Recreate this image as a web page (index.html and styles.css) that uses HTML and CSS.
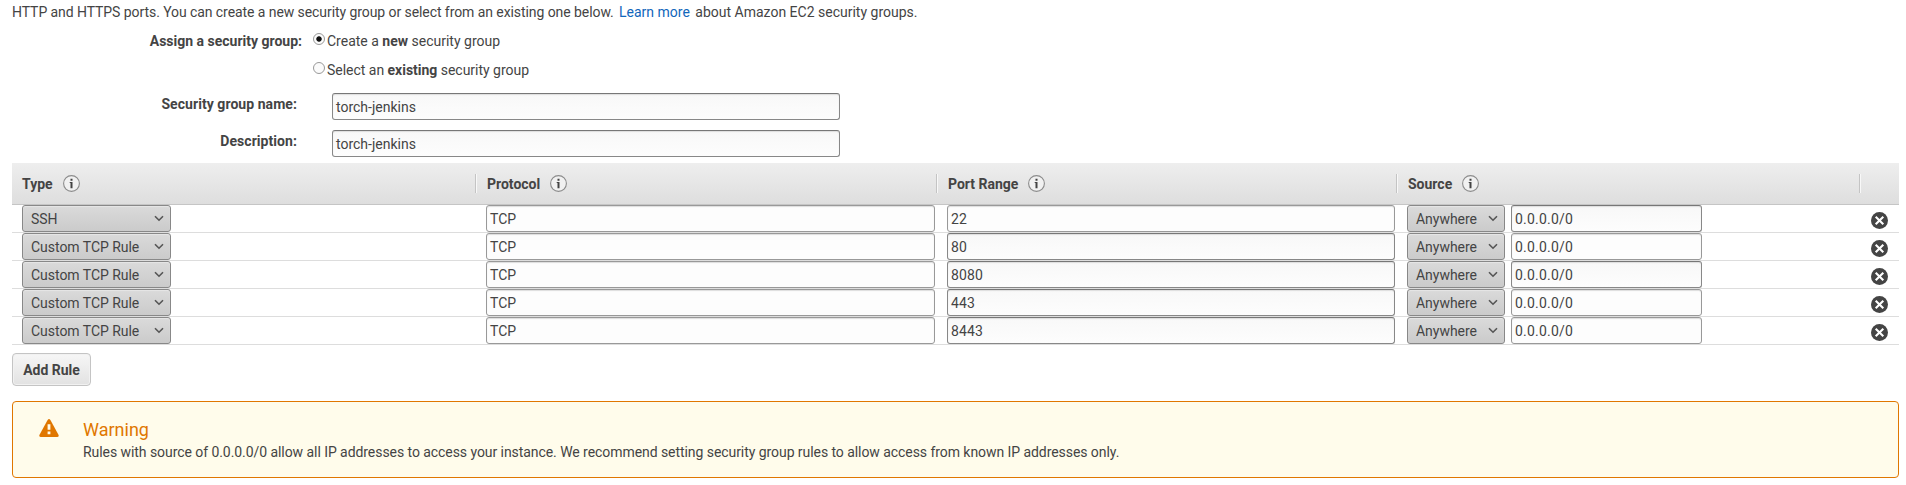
FILE: index.html
```html
<!DOCTYPE html>
<html lang="en">
<head>
<meta charset="utf-8">
<title>Configure Security Group</title>
<link rel="stylesheet" href="styles.css">
</head>
<body>
<svg class="defs" width="0" height="0">
  <symbol id="info" viewBox="0 0 17 17"><circle cx="8.5" cy="8.5" r="7.9" fill="#f1f1f1" stroke="#8c8c8c" stroke-width="1.1"/><path d="M7.5 3.8h2v2h-2zM6.7 7h2.8v6.3h-2V8h-.8z" fill="#444"/></symbol>
  <symbol id="chev" viewBox="0 0 10 7"><path d="M1 1.2L5 5.2L9 1.2" fill="none" stroke="#555" stroke-width="1.6"/></symbol>
  <symbol id="del" viewBox="0 0 17 17"><circle cx="8.5" cy="8.5" r="8.5" fill="#444"/><path d="M4.7 4.7l7.6 7.6M12.3 4.7l-7.6 7.6" stroke="#fff" stroke-width="2.1"/></symbol>
</svg>
<p class="intro"><span class="lead">HTTP and HTTPS ports. You can create a new security group or select from an existing one below. </span><a class="link">Learn more</a> about Amazon EC2 security groups.</p>
<div class="choice"><span class="choice-label">Assign a security group:</span><span class="radio on"></span><span>Create a <b>new</b> security group</span></div>
<div class="choice"><span class="choice-label"></span><span class="radio"></span><span class="option">Select an <b>existing</b> security group</span></div>
<div class="field first"><span class="field-label">Security group name:</span><div class="input wide shade">torch-jenkins</div></div>
<div class="field"><span class="field-label">Description:</span><div class="input wide shade">torch-jenkins</div></div>
<div class="table">
  <div class="row head">
    <div class="th">Type<svg class="info"><use href="#info"/></svg></div>
    <div class="th inner">Protocol<svg class="info"><use href="#info"/></svg></div>
    <div class="th inner">Port Range<svg class="info"><use href="#info"/></svg></div>
    <div class="th inner">Source<svg class="info"><use href="#info"/></svg></div>
    <div class="th last"></div>
  </div>
  <div class="row rule">
    <div class="td"><div class="select type">SSH<svg class="chev"><use href="#chev"/></svg></div></div>
    <div class="td"><div class="input proto">TCP</div></div>
    <div class="td"><div class="input port">22</div></div>
    <div class="td"><div class="select src">Anywhere<svg class="chev"><use href="#chev"/></svg></div><div class="input cidr shade">0.0.0.0/0</div></div>
    <svg class="del"><use href="#del"/></svg>
  </div>
  <div class="row rule">
    <div class="td"><div class="select type">Custom TCP Rule<svg class="chev"><use href="#chev"/></svg></div></div>
    <div class="td"><div class="input proto">TCP</div></div>
    <div class="td"><div class="input port shade">80</div></div>
    <div class="td"><div class="select src">Anywhere<svg class="chev"><use href="#chev"/></svg></div><div class="input cidr">0.0.0.0/0</div></div>
    <svg class="del"><use href="#del"/></svg>
  </div>
  <div class="row rule">
    <div class="td"><div class="select type">Custom TCP Rule<svg class="chev"><use href="#chev"/></svg></div></div>
    <div class="td"><div class="input proto">TCP</div></div>
    <div class="td"><div class="input port shade">8080</div></div>
    <div class="td"><div class="select src">Anywhere<svg class="chev"><use href="#chev"/></svg></div><div class="input cidr shade">0.0.0.0/0</div></div>
    <svg class="del"><use href="#del"/></svg>
  </div>
  <div class="row rule">
    <div class="td"><div class="select type">Custom TCP Rule<svg class="chev"><use href="#chev"/></svg></div></div>
    <div class="td"><div class="input proto">TCP</div></div>
    <div class="td"><div class="input port shade">443</div></div>
    <div class="td"><div class="select src">Anywhere<svg class="chev"><use href="#chev"/></svg></div><div class="input cidr">0.0.0.0/0</div></div>
    <svg class="del"><use href="#del"/></svg>
  </div>
  <div class="row rule">
    <div class="td"><div class="select type">Custom TCP Rule<svg class="chev"><use href="#chev"/></svg></div></div>
    <div class="td"><div class="input proto">TCP</div></div>
    <div class="td"><div class="input port shade">8443</div></div>
    <div class="td"><div class="select src">Anywhere<svg class="chev"><use href="#chev"/></svg></div><div class="input cidr">0.0.0.0/0</div></div>
    <svg class="del"><use href="#del"/></svg>
  </div>
</div>
<div class="add">Add Rule</div>
<div class="warning">
  <svg class="warn-icon" viewBox="0 0 20 18"><path d="M8.6 1Q10-.8 11.4 1L19.6 16Q20 18 18.2 18H1.8Q0 18 .4 16Z" fill="#e07700"/><path d="M8.6 5.2h2.8v5.6H8.6zM8.6 12.4h2.8v2.8H8.6z" fill="#fffceb"/></svg>
  <div>
    <div class="warn-title">Warning</div>
    <div class="warn-text">Rules with source of 0.0.0.0/0 allow all IP addresses to access your instance. We recommend setting security group rules to allow access from known IP addresses only.</div>
  </div>
</div>
</body>
</html>
```
FILE: styles.css
```css
* { box-sizing: border-box; }
body {
  margin: 0;
  padding: 0 7px 0 12px;
  background: #fff;
  color: #444;
  font: 14px/20px Roboto, "Liberation Sans", sans-serif;
  white-space: nowrap;
  overflow: hidden;
}
b { font-weight: 700; }
.defs { display: block; }
.intro { margin: 0; padding-top: 2px; height: 31px; }
.lead { letter-spacing: -0.073px; }
.link { color: #1166bb; margin: 0 2px; }
.choice { display: flex; height: 29px; }
.choice-label { width: 290px; margin-right: 11px; text-align: right; font-weight: 700; }
.option { letter-spacing: -0.02px; }
.radio {
  width: 12px;
  height: 12px;
  margin: 2px 2px 0 0;
  border: 1px solid #999;
  border-radius: 50%;
  background: #fbfbfb;
}
.on { background: radial-gradient(circle, #111 0 2.3px, #fbfbfb 3.1px); }
.field { display: flex; height: 37px; }
.first { margin-top: 4px; }
.field-label {
  width: 285px;
  margin-right: 35px;
  padding-top: 1px;
  text-align: right;
  font-weight: 700;
  letter-spacing: 0.06px;
}
.input {
  height: 27px;
  padding-left: 3px;
  border: 1px solid #999;
  border-radius: 3px;
  background: #fdfdfd;
  box-shadow: inset 0 1px 1px #ddd;
  line-height: 26px;
}
.shade { border-color: #777 #888 #888; background: linear-gradient(#f8f8f8, #fdfdfd); }
.wide { width: 508px; }
.table { margin-top: -4px; }
.row { display: grid; grid-template-columns: 464px 461px 460px 463px 39px; }
.head {
  height: 42px;
  align-items: center;
  border-bottom: 1px solid #c5c5c5;
  background: linear-gradient(#eee, #dedede);
}
.th {
  display: flex;
  align-items: center;
  height: 19px;
  padding-left: 10px;
  border-right: 1px solid #c4c4c4;
  box-shadow: 1px 0 #f8f8f8;
  font-weight: 700;
}
.inner { padding-left: 11px; }
.last { border: 0; box-shadow: none; }
.info { width: 17px; height: 17px; margin-left: 10px; }
.rule { height: 28px; border-bottom: 1px solid #ddd; }
.td { display: flex; padding-left: 10px; }
.select {
  display: flex;
  justify-content: space-between;
  align-items: center;
  height: 27px;
  padding: 0 6.5px 0 8px;
  border: 1px solid #888;
  border-radius: 3px;
  background: linear-gradient(#dadada, #cbcbcb);
  box-shadow: inset 0 1px 1px #e6e6e6;
  letter-spacing: -0.03px;
}
.chev { width: 10px; height: 7px; }
.type { width: 149px; }
.proto { width: 449px; }
.port { width: 448px; letter-spacing: 0.1px; }
.src { width: 98px; margin-right: 6px; }
.cidr { width: 191px; letter-spacing: 0.2px; }
.del { width: 17px; height: 17px; margin: 7px 0 0 11px; }
.add {
  width: 79px;
  height: 33px;
  margin-top: 8px;
  border: 1px solid #c4c4c4;
  border-radius: 4px;
  background: linear-gradient(#f6f6f6, #e2e2e2);
  box-shadow: inset 0 0 0 1px #f1f1f1;
  line-height: 32px;
  text-align: center;
  font-weight: 700;
}
.warning {
  display: flex;
  height: 77px;
  margin-top: 15px;
  padding: 17px 0 0 26px;
  border: 1px solid #e07700;
  border-radius: 4px;
  background: #fffceb;
}
.warn-icon { width: 20px; height: 18px; margin-right: 24px; }
.warn-title { color: #e07700; font-size: 18px; line-height: 22px; }
.warn-text { line-height: 22px; letter-spacing: -0.06px; }
```
